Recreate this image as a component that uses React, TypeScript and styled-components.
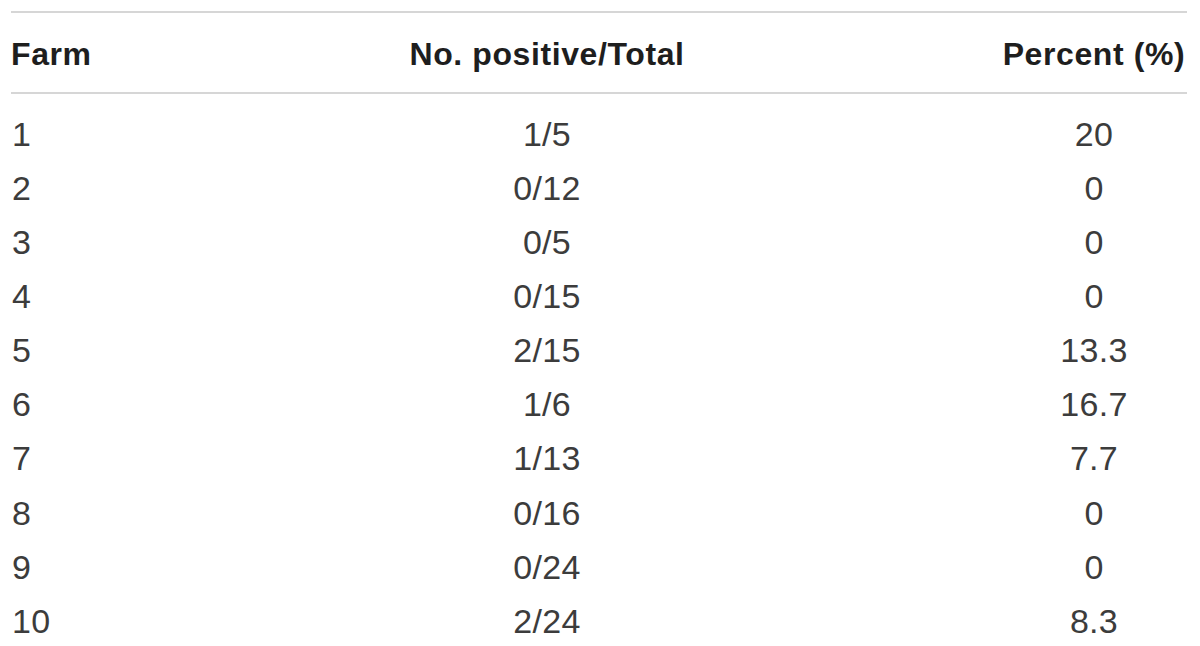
import React from "react";
import styled, { createGlobalStyle } from "styled-components";

const Global = createGlobalStyle`
  html, body { margin: 0; padding: 0; background: #ffffff; }
  body { font-family: "Liberation Sans", Arial, Helvetica, sans-serif; }
`;

const Page = styled.div`
  padding: 11px 13px 0 11px;
  width: 1200px;
  height: 646px;
  box-sizing: border-box;
  overflow: hidden;
`;

const Table = styled.div`
  display: grid;
  grid-template-columns: 82px 908px 186px;
  border-top: 2px solid #d6d6d6;
`;

const HeadRow = styled.div`
  display: contents;
`;

type AlignProps = { $align: "left" | "center" | "right" };

const HeadCell = styled.div<AlignProps>`
  height: 81px;
  box-sizing: border-box;
  display: flex;
  align-items: center;
  justify-content: ${(p) =>
    p.$align === "left" ? "flex-start" : p.$align === "right" ? "flex-end" : "center"};
  font-size: 32px;
  letter-spacing: 0.6px;
  font-weight: 700;
  color: #1e1e1e;
  white-space: nowrap;
  border-bottom: 2px solid #d6d6d6;
  padding-top: 3px;
`;

const Body = styled.div`
  display: contents;
`;

const Cell = styled.div<AlignProps & { $first?: boolean }>`
  height: 54.15px;
  margin-top: ${(p) => (p.$first ? "13px" : "0")};
  display: flex;
  align-items: center;
  justify-content: ${(p) =>
    p.$align === "left" ? "flex-start" : p.$align === "right" ? "flex-end" : "center"};
  font-size: 34px;
  letter-spacing: 0.3px;
  font-weight: 400;
  color: #3c3c3c;
  white-space: nowrap;
  padding-left: ${(p) => (p.$align === "left" ? "1px" : "0")};
`;

const rows: [string, string, string][] = [
  ["1", "1/5", "20"],
  ["2", "0/12", "0"],
  ["3", "0/5", "0"],
  ["4", "0/15", "0"],
  ["5", "2/15", "13.3"],
  ["6", "1/6", "16.7"],
  ["7", "1/13", "7.7"],
  ["8", "0/16", "0"],
  ["9", "0/24", "0"],
  ["10", "2/24", "8.3"],
];

export default function App() {
  return (
    <Page>
      <Global />
      <Table>
        <HeadRow>
          <HeadCell $align="left">Farm</HeadCell>
          <HeadCell $align="center">No. positive/Total</HeadCell>
          <HeadCell $align="center">Percent (%)</HeadCell>
        </HeadRow>
        <Body>
          {rows.map((r, i) => (
            <React.Fragment key={r[0]}>
              <Cell $align="left" $first={i === 0}>{r[0]}</Cell>
              <Cell $align="center" $first={i === 0}>{r[1]}</Cell>
              <Cell $align="center" $first={i === 0}>{r[2]}</Cell>
            </React.Fragment>
          ))}
        </Body>
      </Table>
    </Page>
  );
}
